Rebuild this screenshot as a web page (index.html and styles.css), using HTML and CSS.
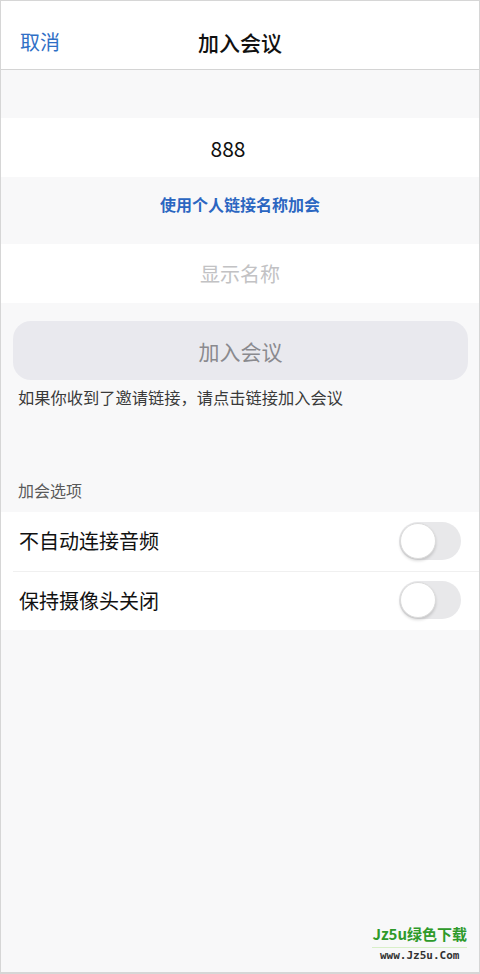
FILE: index.html
```html
<!DOCTYPE html>
<html>
<head>
    <meta charset="utf-8">
    <link rel="stylesheet" href="styles.css">
</head>

<body>
<div class="frame">
  <div class="nav">
    <span class="cancel">取消</span>
    <span class="title">加入会议</span>
  </div>

  <div class="meeting-id">888</div>
  <div class="link-row">使用个人链接名称加会</div>
  <div class="name-row">显示名称</div>

  <div class="join-btn">加入会议</div>
  <p class="hint">如果你收到了邀请链接，请点击链接加入会议</p>

  <p class="section">加会选项</p>
  <div class="options">
    <div class="option">
      <span>不自动连接音频</span>
      <span class="switch"><span class="knob"></span></span>
    </div>
    <div class="option">
      <span>保持摄像头关闭</span>
      <span class="switch"><span class="knob"></span></span>
    </div>
  </div>

  <div class="mark">
    <div class="mark-top">Jz5u绿色下载</div>
    <div class="mark-url">www.Jz5u.Com</div>
  </div>
</div>
</body>
</html>
```

FILE: styles.css
```css
*{
  margin: 0;
  padding: 0;
  box-sizing: border-box;
}
body {
  font-family: "Noto Sans CJK SC", "Noto Sans", sans-serif;
  color: #111;
}
.frame{
  position: relative;
  width: 480px;
  height: 974px;
  border: 1px solid #d6d6d6;
  border-bottom-width: 2px;
  background: #f8f8f9;
  overflow: hidden;
}
.nav{
  position: relative;
  height: 69px;
  background: #fff;
  border-bottom: 1px solid #d4d4d4;
  display: flex;
  align-items: center;
  justify-content: center;
  padding-top: 14px;
}
.cancel{
  position: absolute;
  left: 19px;
  top: 26px;
  font-size: 20px;
  color: #2f6fc6;
}
.title{
  font-size: 21px;
  font-weight: 500;
}
.meeting-id{
  margin-top: 48px;
  height: 59px;
  background: #fff;
  display: flex;
  align-items: center;
  justify-content: center;
  font-size: 21px;
  padding: 0 24px 0 0;
}
.link-row{
  height: 67px;
  display: flex;
  align-items: center;
  justify-content: center;
  font-size: 16px;
  font-weight: 700;
  color: #2b66c1;
  padding-bottom: 14px;
}
.name-row{
  height: 59px;
  background: #fff;
  display: flex;
  align-items: center;
  justify-content: center;
  font-size: 20px;
  color: #c2c2c4;
}
.join-btn{
  margin: 18px 11px 0 12px;
  height: 59px;
  border-radius: 18px;
  background: #e9e9ee;
  display: flex;
  align-items: center;
  justify-content: center;
  font-size: 21px;
  color: #8a8a8e;
}
.hint{
  margin: 5px 0 0 17px;
  font-size: 16.25px;
  line-height: 24px;
  color: #3a3a3a;
}
.section{
  margin: 69px 0 0 17px;
  font-size: 16px;
  line-height: 24px;
  color: #5a5a5a;
}
.options{
  margin-top: 10px;
  background: #fff;
  padding-left: 12px;
}
.option{
  height: 59px;
  display: flex;
  align-items: center;
  justify-content: space-between;
  padding: 0 18px 2px 6px;
  font-size: 20px;
}
.option + .option{
  border-top: 1px solid #f0f0f0;
}
.switch{
  position: relative;
  width: 62px;
  height: 38px;
  border-radius: 19px;
  background: #e8e8ea;
}
.knob{
  position: absolute;
  left: 1px;
  top: 1px;
  width: 36px;
  height: 36px;
  border-radius: 50%;
  background: #fff;
  border: 1px solid #dcdcdc;
  box-shadow: 0 2px 3px rgba(0,0,0,0.15);
}
.mark{
  position: absolute;
  right: 12px;
  bottom: 8px;
  text-align: center;
}
.mark-top{
  font-size: 15px;
  font-weight: 700;
  color: #2e9a2a;
  line-height: 22px;
  border-bottom: 1px solid #d8efc8;
  padding-bottom: 2px;
}
.mark-url{
  font-family: "DejaVu Sans Mono", monospace;
  font-size: 11px;
  font-weight: 700;
  color: #333;
  line-height: 16px;
}
```
